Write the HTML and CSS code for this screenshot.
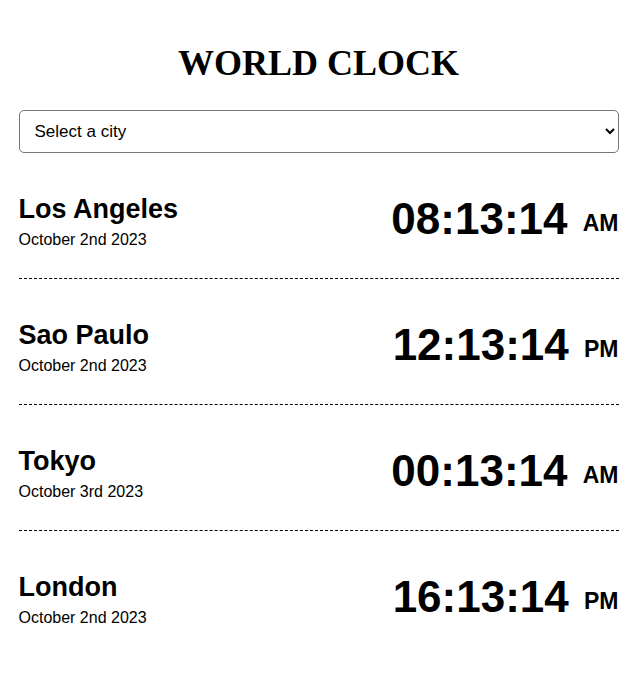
FILE: index.html
```html
<!DOCTYPE html>
<html lang="en">
<head>
<meta charset="utf-8">
<title>World Clock</title>
<link rel="stylesheet" href="styles.css">
</head>
<body>
<div class="container">
  <h1 class="title">WORLD CLOCK</h1>
  <select class="city-select">
    <option>Select a city</option>
    <option>Los Angeles</option>
    <option>Sao Paulo</option>
    <option>Tokyo</option>
    <option>London</option>
  </select>
  <div class="cities">
    <div class="city">
      <div class="city-info">
        <h2 class="city-name">Los Angeles</h2>
        <div class="city-date">October 2nd 2023</div>
      </div>
      <div class="city-time">08:13:14 <span class="ampm">AM</span></div>
    </div>
    <div class="city">
      <div class="city-info">
        <h2 class="city-name">Sao Paulo</h2>
        <div class="city-date">October 2nd 2023</div>
      </div>
      <div class="city-time">12:13:14 <span class="ampm">PM</span></div>
    </div>
    <div class="city">
      <div class="city-info">
        <h2 class="city-name">Tokyo</h2>
        <div class="city-date">October 3rd 2023</div>
      </div>
      <div class="city-time">00:13:14 <span class="ampm">AM</span></div>
    </div>
    <div class="city">
      <div class="city-info">
        <h2 class="city-name">London</h2>
        <div class="city-date">October 2nd 2023</div>
      </div>
      <div class="city-time">16:13:14 <span class="ampm">PM</span></div>
    </div>
  </div>
</div>
</body>
</html>
```
FILE: styles.css
```css
body {
  margin: 0;
  background: #fff;
  color: #000;
  font-family: "Liberation Sans", Arial, sans-serif;
}
.container {
  max-width: 600px;
  margin: 0 auto;
  padding-top: 42px;
}
.title {
  font-family: "Liberation Serif", "Times New Roman", serif;
  font-weight: bold;
  font-size: 36px;
  text-align: center;
  margin: 0 0 26px;
}
.city-select {
  display: block;
  width: 100%;
  height: 43px;
  font-family: "Liberation Sans", Arial, sans-serif;
  font-size: 17px;
  color: #000;
  background: #fff;
  border: 1px solid #767676;
  border-radius: 5px;
  padding: 0 11px;
}
.city {
  display: flex;
  justify-content: space-between;
  align-items: flex-start;
  padding: 41px 0 29px;
  border-bottom: 1px dashed #000;
}
.city:last-child {
  border-bottom: none;
}
.city-name {
  margin: 0 0 6px;
  font-size: 27px;
  font-weight: bold;
}
.city-date {
  font-size: 16px;
}
.city-time {
  font-size: 44px;
  font-weight: bold;
}
.ampm {
  font-size: 23px;
  margin-left: 3px;
  vertical-align: 3px;
}
```
